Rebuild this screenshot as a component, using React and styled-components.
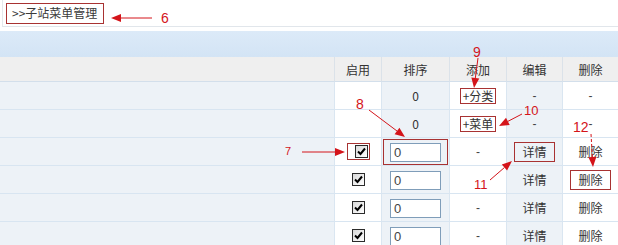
import React from 'react';
import styled, { createGlobalStyle, css } from 'styled-components';

const GlobalStyle = createGlobalStyle`
  body {
    margin: 0;
    background: #fff;
    font-family: "Noto Sans CJK SC", "Liberation Sans", sans-serif;
    font-size: 12px;
    color: #333;
  }
`;

const COLUMNS = '335px 47px 68px 57px 56px 55px';

const Page = styled.div`
  position: relative;
  width: 618px;
  height: 245px;
  overflow: hidden;
`;

const TopBar = styled.div`
  height: 26px;
  display: flex;
  align-items: center;
  padding-left: 6px;
  border-left: 1px solid #e4e8ec;
  margin-left: 2px;
  border-bottom: 1px solid #e1e6eb;
  margin-bottom: 4px;
`;

const marked = css`
  border: 1px solid ${(p) => (p.$marked ? '#a83232' : 'transparent')};
`;

const Title = styled.div`
  ${marked};
  margin-left: -3px;
  height: 21px;
  box-sizing: border-box;
  display: flex;
  align-items: center;
  padding: 0 6px 0 5px;
  line-height: 1;
  color: #3a3a3a;
`;

const Band = styled.div`
  height: 26px;
  background: linear-gradient(#dceaf8, #d3e4f5);
`;

const Row = styled.div`
  display: grid;
  grid-template-columns: ${COLUMNS};
  height: ${(p) => (p.$head ? 25 : 28)}px;
`;

const Cell = styled.div`
  box-sizing: border-box;
  display: flex;
  align-items: center;
  justify-content: center;
  border-right: 1px solid ${(p) => (p.$head ? '#dbe2e9' : '#dae6f1')};
  border-bottom: 1px solid ${(p) => (p.$head ? '#d3dfeb' : '#d8e5f1')};
  background: ${(p) => (p.$head ? '#efefef' : p.$tint ? '#edf2f7' : '#ffffff')};
  white-space: nowrap;
  &:last-child {
    border-right: none;
  }
`;

const Tag = styled.span`
  ${marked};
  display: inline-flex;
  align-items: center;
  box-sizing: border-box;
  height: ${(p) => (p.$tall ? 20 : 16)}px;
  padding: 0 ${(p) => (p.$tall ? 7 : 2)}px;
  line-height: 1;
`;

const Dash = styled.span`
  font-family: "Liberation Sans", sans-serif;
  font-size: 12px;
  line-height: 1;
  color: #444;
`;

const Frame = styled.span`
  ${marked};
  display: inline-flex;
  align-items: center;
  padding: ${(p) => p.$pad};
`;

const Check = styled.span`
  display: inline-flex;
  align-items: center;
  justify-content: center;
  width: 13px;
  height: 13px;
  box-sizing: border-box;
  border: 1px solid #2b2b2b;
  background: linear-gradient(135deg, #d9d9d9, #ffffff);
`;

const Input = styled.span`
  display: inline-flex;
  align-items: center;
  width: 51px;
  height: 19px;
  box-sizing: border-box;
  border: 1px solid #7f9db9;
  background: #fff;
  padding-left: 3px;
  font-family: "Liberation Sans", sans-serif;
  font-size: 13px;
  color: #444;
`;

const Overlay = styled.div`
  position: absolute;
  inset: 0;
  pointer-events: none;
`;

const Label = styled.span`
  position: absolute;
  color: #d4141a;
  font-family: "Liberation Sans", sans-serif;
  font-size: ${(p) => p.$size || 14}px;
  line-height: 1;
`;

// the "-" of the fourth row's 添加 cell sits under label 11 in the shot
const rows = [
  { order: '0', add: '+分类', addMark: true, edit: '-', del: '-' },
  { order: '0', add: '+菜单', addMark: true, edit: '-', del: '-' },
  { check: true, checkMark: true, input: '0', inputMark: true, add: '-', edit: '详情', editMark: true, del: '删除' },
  { check: true, input: '0', add: '', edit: '详情', del: '删除', delMark: true },
  { check: true, input: '0', add: '-', edit: '详情', del: '删除' },
  { check: true, input: '0', add: '-', edit: '详情', del: '删除' },
];

const arrows = [
  { x1: 152, y1: 18, x2: 111, y2: 18 },
  { x1: 478, y1: 58, x2: 474, y2: 88 },
  { x1: 522, y1: 114, x2: 499, y2: 126 },
  { x1: 369, y1: 110, x2: 405, y2: 137 },
  { x1: 302, y1: 152, x2: 345, y2: 152 },
  { x1: 490, y1: 180, x2: 512, y2: 161 },
  { x1: 591, y1: 134, x2: 593, y2: 167, dashed: true },
];

const labels = [
  { text: '6', x: 161, y: 11 },
  { text: '9', x: 473, y: 45 },
  { text: '10', x: 524, y: 104, size: 13 },
  { text: '8', x: 356, y: 97 },
  { text: '7', x: 285, y: 146, size: 11 },
  { text: '11', x: 474, y: 178, size: 13 },
  { text: '12', x: 573, y: 120 },
];

const Arrow = ({ x1, y1, x2, y2, dashed }) => {
  const dx = x2 - x1;
  const dy = y2 - y1;
  const len = Math.hypot(dx, dy);
  const ux = dx / len;
  const uy = dy / len;
  const bx = x2 - ux * 10;
  const by = y2 - uy * 10;
  const px = -uy * 4;
  const py = ux * 4;
  return (
    <g>
      <line x1={x1} y1={y1} x2={bx} y2={by} stroke="#d4141a" strokeWidth="1" strokeDasharray={dashed ? '3 2' : undefined} />
      <polygon points={`${x2},${y2} ${bx + px},${by + py} ${bx - px},${by - py}`} fill="#d4141a" />
    </g>
  );
};

const CheckMark = () => (
  <svg width="9" height="9" viewBox="0 0 9 9">
    <path d="M1 4.5 L3.5 7 L8 1.5" fill="none" stroke="#000" strokeWidth="2" />
  </svg>
);

const Value = ({ text, mark }) =>
  text === '-' ? (
    <Dash>-</Dash>
  ) : (
    <Tag $marked={mark} $tall={text.length === 2}>{text}</Tag>
  );

const App = () => (
  <Page>
    <GlobalStyle />
    <TopBar>
      <Title $marked>&gt;&gt;子站菜单管理</Title>
    </TopBar>
    <Band />
    <Row $head>
      <Cell $head />
      <Cell $head>启用</Cell>
      <Cell $head>排序</Cell>
      <Cell $head>添加</Cell>
      <Cell $head>编辑</Cell>
      <Cell $head>删除</Cell>
    </Row>
    {rows.map((r, i) => (
      <Row key={i}>
        <Cell $tint />
        <Cell>
          {r.check && (
            <Frame $marked={r.checkMark} $pad={r.checkMark ? '1px 1px 1px 7px' : '2px'}>
              <Check><CheckMark /></Check>
            </Frame>
          )}
        </Cell>
        <Cell $tint>
          {r.input ? (
            <Frame $marked={r.inputMark} $pad="3px 6px 2px 6px">
              <Input>{r.input}</Input>
            </Frame>
          ) : (
            r.order
          )}
        </Cell>
        <Cell>{r.add && <Value text={r.add} mark={r.addMark} />}</Cell>
        <Cell $tint>
          <Value text={r.edit} mark={r.editMark} />
        </Cell>
        <Cell>
          <Value text={r.del} mark={r.delMark} />
        </Cell>
      </Row>
    ))}
    <Overlay>
      <svg width="618" height="245">
        {arrows.map((a, i) => (
          <Arrow key={i} {...a} />
        ))}
      </svg>
      {labels.map((l) => (
        <Label key={l.text} $size={l.size} style={{ left: l.x, top: l.y }}>
          {l.text}
        </Label>
      ))}
    </Overlay>
  </Page>
);

export default App;
